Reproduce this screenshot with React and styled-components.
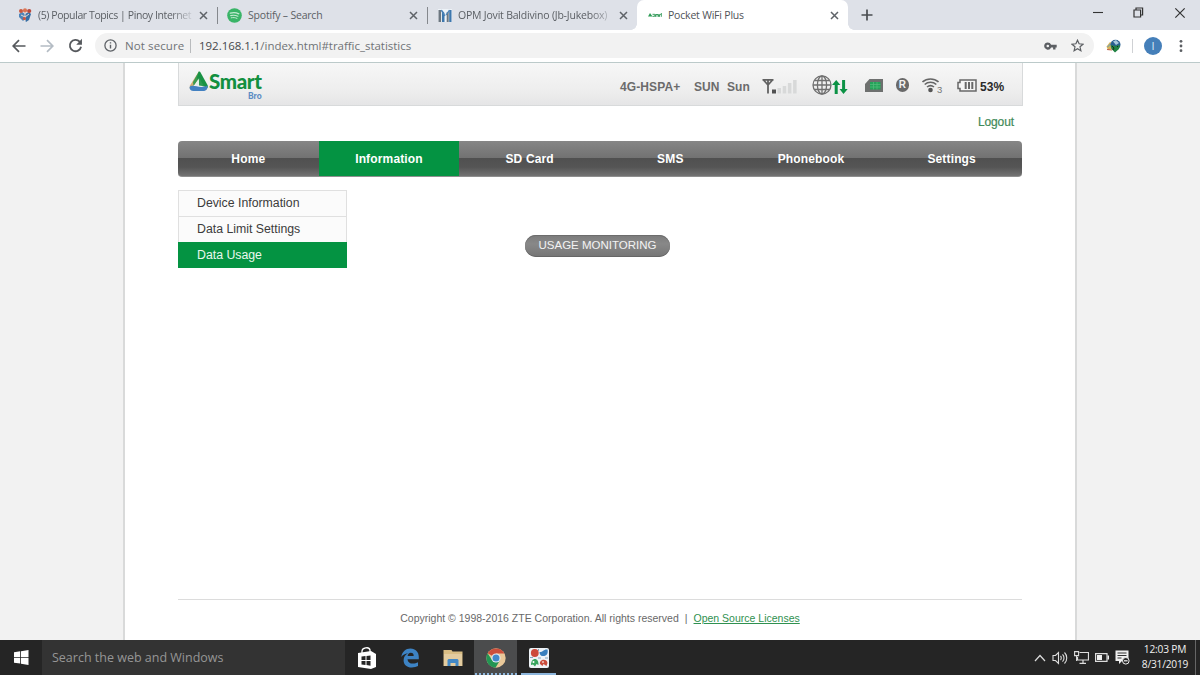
import styled, { createGlobalStyle } from "styled-components";

const GlobalStyle = createGlobalStyle`
  * { box-sizing: border-box; }
  body {
    margin: 0;
    overflow: hidden;
    background: #f1f1f1;
    font-family: "Liberation Sans", Arial, sans-serif;
  }
  svg { display: block; flex: none; }
`;

const Screen = styled.div`
  width: 1200px;
  height: 675px;
  display: flex;
  flex-direction: column;
`;

/* ---------- browser ---------- */

const TabStrip = styled.div`
  height: 30px;
  flex: none;
  display: flex;
  background: #dee1e8;
  font-family: "Open Sans", "Noto Sans", sans-serif;
`;

const Tab = styled.div`
  position: relative;
  width: ${(p) => p.$width}px;
  height: 30px;
  display: flex;
  align-items: center;
  padding: 0 9px 0 ${(p) => p.$left}px;
  background: ${(p) => (p.$active ? "#fff" : "transparent")};
  border-radius: ${(p) => (p.$active ? "7px 7px 0 0" : "0")};

  /* flared feet of the selected tab */
  &::before,
  &::after {
    content: "";
    display: ${(p) => (p.$active ? "block" : "none")};
    position: absolute;
    bottom: 0;
    width: 6px;
    height: 6px;
  }
  &::before {
    left: -6px;
    background: radial-gradient(circle at 0 0, transparent 5.5px, #fff 6px);
  }
  &::after {
    right: -6px;
    background: radial-gradient(circle at 100% 0, transparent 5.5px, #fff 6px);
  }
`;

const TabTitle = styled.span`
  flex: 1;
  margin: 0 ${(p) => (p.$fade ? 7 : 0)}px 0 6px;
  font-size: 10.5px;
  letter-spacing: ${(p) => p.$spacing ?? -0.2}px;
  color: ${(p) => (p.$active ? "#505357" : "#5b5f64")};
  white-space: nowrap;
  mask-image: ${(p) => (p.$fade ? "linear-gradient(90deg, #000 86%, rgba(0,0,0,.15))" : "none")};
`;

const TabDivider = styled.div`
  width: 1px;
  height: 17px;
  align-self: center;
  background: #85888d;
`;

const NewTab = styled.div`
  display: flex;
  align-items: center;
  padding-left: 13px;
`;

const WindowButtons = styled.div`
  display: flex;
  align-items: flex-start;
  gap: 30px;
  margin-left: auto;
  padding: 7px 14px 0 0;
`;

const Toolbar = styled.div`
  height: 33px;
  flex: none;
  display: flex;
  align-items: flex-start;
  background: #fff;
  border-bottom: 1px solid #bccaca;
  font-family: "Open Sans", "Noto Sans", sans-serif;
`;

const NavIcons = styled.div`
  width: 95px;
  height: 31px;
  display: flex;
  align-items: center;
  gap: 14px;
  padding-left: 12px;
`;

const Omnibox = styled.div`
  width: 999px;
  height: 25px;
  margin-top: 3px;
  display: flex;
  align-items: center;
  padding: 0 10px 0 9px;
  border-radius: 13px;
  background: #f2f2f2;
  color: #707376;
  font-size: 11.5px;
`;

const Security = styled.span`
  width: 66px;
  margin-left: 8px;
  border-right: 1px solid #b9bbbd;
  line-height: 14px;
  white-space: nowrap;
  letter-spacing: 0.1px;
`;

const Address = styled.span`
  margin-left: 8px;
  letter-spacing: -0.03px;
  b {
    font-weight: 400;
    color: #45484b;
  }
`;

const OmniboxActions = styled.div`
  display: flex;
  align-items: center;
  gap: 14px;
  margin-left: auto;
`;

const ToolbarActions = styled.div`
  height: 31px;
  display: flex;
  align-items: center;
  padding-left: 12px;
`;

const ToolbarDivider = styled.div`
  width: 1px;
  height: 14px;
  margin: 0 11px;
  background: #cfd1d4;
`;

const Avatar = styled.div`
  width: 18px;
  height: 18px;
  margin-right: 17px;
  border-radius: 50%;
  background: #457fb9;
  color: #dce9f5;
  font-size: 11px;
  line-height: 18px;
  text-align: center;
`;

/* ---------- router page ---------- */

const Viewport = styled.div`
  height: 577px;
  flex: none;
  display: flex;
  justify-content: center;
  background: #f2f2f2;
`;

const Page = styled.div`
  width: 954px;
  height: 577px;
  display: flex;
  flex-direction: column;
  padding: 0 52px 0 53px;
  background: #fff;
  border: solid #d9dada;
  border-width: 0 2px;
`;

const StatusBar = styled.header`
  width: 845px;
  height: 43px;
  flex: none;
  display: flex;
  padding-left: 10px;
  border: 1px solid #d8dadb;
  border-top: 0;
  background: linear-gradient(#f7f7f7, #ededed 70%, #e5e5e6);
`;

const Logo = styled.div`
  width: 431px;
  display: flex;
  align-items: flex-start;
  padding-top: 8px;
`;

const LogoText = styled.div`
  display: flex;
  flex-direction: column;
  align-items: flex-end;
  margin-left: 1px;
  color: #12903f;
  font: 900 20.5px/21px Lato, sans-serif;
  letter-spacing: -0.35px;
`;

const LogoSub = styled.span`
  color: #5b8cc4;
  font: 900 8.5px/8px Lato, sans-serif;
  letter-spacing: 0;
`;

const StatusItem = styled.div`
  width: ${(p) => p.$width}px;
  height: ${(p) => (p.$icon ? 44 : 47)}px;
  display: flex;
  align-items: center;
  white-space: nowrap;
  font-size: 12px;
  font-weight: 700;
  letter-spacing: 0.1px;
  color: ${(p) => (p.$dark ? "#2a2a2a" : "#6b6b6b")};
`;

const LogoutRow = styled.div`
  height: 35px;
  flex: none;
  padding: 8px 9px 0 0;
  text-align: right;
  font-size: 12px;
  line-height: 16px;
  letter-spacing: -0.1px;
  color: #3f8a58;
  -webkit-text-stroke: 0.2px #3f8a58;
`;

const MainNav = styled.nav`
  width: 844px;
  height: 36px;
  flex: none;
  display: grid;
  grid-template-columns: repeat(6, 1fr);
  overflow: hidden;
  border-radius: 4px;
  border-bottom: 1px solid #8f8f8f;
  background: linear-gradient(#868686, #727272 48%, #505050 50%, #555 75%, #737373);
`;

const NavItem = styled.a`
  display: flex;
  align-items: center;
  justify-content: center;
  padding-top: 1px;
  color: #fff;
  font-size: 12px;
  font-weight: 700;
  letter-spacing: 0.15px;
  background: ${(p) => (p.$active ? "#049342" : "transparent")};
`;

const Body = styled.div`
  flex: 1;
  display: flex;
  padding-top: 13px;
`;

const SideMenu = styled.ul`
  width: 169px;
  margin: 0;
  padding: 0;
  list-style: none;
`;

const SideItem = styled.li`
  height: 26px;
  padding-left: 18px;
  font-size: 12.3px;
  line-height: 25px;
  color: ${(p) => (p.$active ? "#e9f7ee" : "#3c3c3c")};
  background: ${(p) => (p.$active ? "#049342" : "#fbfbfb")};
  border: solid ${(p) => (p.$active ? "#049342" : "#e0e0e0")};
  border-width: ${(p) => (p.$active ? "1px" : "1px 1px 0")};
`;

const Content = styled.main`
  padding: 45px 0 0 178px;
`;

const PillButton = styled.button`
  width: 145px;
  height: 22px;
  padding: 0 0 2px;
  border: 0;
  border-radius: 11px;
  background: linear-gradient(#7b7b7b, #888 40%, #757575);
  box-shadow: 0 1px 0 #6c6c6c inset, 0 -1px 0 #666 inset;
  color: #f3f3f3;
  font: 11.5px/20px "Liberation Sans", Arial, sans-serif;
  white-space: nowrap;
`;

const Footer = styled.footer`
  width: 844px;
  height: 41px;
  flex: none;
  padding-top: 11px;
  border-top: 1px solid #dcdcdc;
  text-align: center;
  color: #686868;
  font-size: 10.5px;
  line-height: 15px;
`;

const FooterPipe = styled.span`
  margin: 0 6px;
`;

const FooterLink = styled.a`
  color: #2f9150;
  text-decoration: underline;
`;

/* ---------- taskbar ---------- */

const Taskbar = styled.div`
  height: 35px;
  flex: none;
  display: flex;
  background: #252525;
  color: #f0f0f0;
  font-family: "Open Sans", "Noto Sans", sans-serif;
`;

const Start = styled.div`
  width: 42px;
  padding: 10px 0 0 14px;
`;

const Search = styled.div`
  width: 303px;
  padding-left: 10px;
  background: #333;
  color: #969696;
  font-size: 12.5px;
  line-height: 36px;
`;

const TaskButton = styled.div`
  width: 43px;
  height: 35px;
  display: flex;
  flex-direction: column;
  align-items: center;
  justify-content: space-between;
  background: ${(p) => (p.$focused ? "#4b4c4d" : "transparent")};
`;

const TaskIcon = styled.div`
  height: 33px;
  display: flex;
  align-items: center;
  padding-top: 2px;
`;

const RunningLine = styled.div`
  width: ${(p) => p.$width}px;
  border-bottom: 2px ${(p) => p.$line} #8db6dc;
`;

const Tray = styled.div`
  display: flex;
  align-items: center;
  gap: 6px;
  margin-left: auto;
`;

const Clock = styled.div`
  width: 56px;
  margin-left: 1px;
  padding-bottom: 2px;
  font-size: 10.2px;
  line-height: 14.5px;
  letter-spacing: -0.2px;
  text-align: center;
  white-space: nowrap;
`;

const ShowDesktop = styled.div`
  width: 5px;
  height: 35px;
  margin-left: -4px;
  border-left: 1px solid #666;
`;

/* ---------- icons ---------- */

const CloseIcon = ({ size = 9, color = "#5f6368", stroke = 1.5 }) => (
  <svg width={size} height={size} viewBox="0 0 9 9">
    <path d="M1 1l7 7M8 1L1 8" stroke={color} strokeWidth={stroke} />
  </svg>
);

const ForumIcon = () => (
  <svg width="14" height="14" viewBox="0 0 14 14">
    <path d="M1 6l3-2 3 2v5l-2 2-4-4z" fill="#4f84b8" />
    <path d="M7 6l4-2 2 2-2 6-3 2-1-2z" fill="#386fa5" />
    <circle cx="3" cy="3" r="2" fill="#c9583f" />
    <circle cx="7" cy="2.4" r="2.1" fill="#dc7453" />
    <circle cx="11.2" cy="3" r="2.1" fill="#b84a3d" />
    <path d="M3 7l4 2 4-3M7 5v8" stroke="#e9d8cf" fill="none" />
    <circle cx="6.4" cy="10.5" r="1.6" fill="#cd543d" />
  </svg>
);

const SpotifyIcon = () => (
  <svg width="15" height="15" viewBox="0 0 15 15">
    <circle cx="7.5" cy="7.5" r="7.3" fill="#39b467" />
    <g fill="none" stroke="#c5ead2" strokeLinecap="round">
      <path d="M3.3 5.2c3-.9 6-.6 8.5.6" strokeWidth="1.3" />
      <path d="M3.7 7.6c2.6-.7 5-.4 7.2.7" strokeWidth="1.1" />
      <path d="M4.2 9.8c2-.5 4-.3 5.8.6" strokeWidth="1" />
    </g>
  </svg>
);

const ForumLetterIcon = () => (
  <svg width="14" height="13" viewBox="0 0 14 13">
    <path d="M0 0h14v13H0z" fill="#eef3f8" />
    <path d="M.5 1h2.6v12H.5zM8.7 3h2v10h-2z" fill="#6d7780" />
    <path d="M4 1l2.5 3v9H4zM11.2 1h2.3v12h-2.3z" fill="#3d77ad" />
    <path d="M3 1l4 6M11.5 1L8 6" stroke="#4c83b8" strokeWidth="1.3" />
  </svg>
);

const SmartFavicon = () => (
  <svg width="14" height="6" viewBox="0 0 14 6">
    <path d="M0 4.5l2-3.500 2.500 3.500z" fill="#2b9b53" />
    <path d="M4.500 2.300h2.300v2H4.500M7.500 4.800V2.500h3v2.300M9 2.500v2.300M11.500 4.800V2.500h1.300M13.300 1v3.800" stroke="#3b9e60" strokeWidth="1" fill="none" />
  </svg>
);

const PlusIcon = () => (
  <svg width="12" height="12" viewBox="0 0 12 12">
    <path d="M6 .5v11M.5 6h11" stroke="#4a4d50" strokeWidth="1.7" />
  </svg>
);

const MinimizeIcon = () => (
  <svg width="10" height="12" viewBox="0 0 10 12">
    <path d="M0 5.5h10" stroke="#333" strokeWidth="1.1" />
  </svg>
);

const RestoreIcon = () => (
  <svg width="11" height="11" viewBox="0 0 11 11">
    <path d="M1 3h6.6v7H1zM3 3V1h6.6v7H7.6" fill="none" stroke="#333" strokeWidth="1.2" />
  </svg>
);

const ArrowIcon = ({ color, flip }) => (
  <svg width="14" height="14" viewBox="0 0 14 14">
    <path
      d={flip ? "M.5 7h12M7 1.200L12.800 7 7 12.800" : "M13.500 7h-12M7 1.200L1.200 7 7 12.800"}
      fill="none"
      stroke={color}
      strokeWidth="1.7"
    />
  </svg>
);

const ReloadIcon = () => (
  <svg width="15" height="15" viewBox="0 0 14 14">
    <path d="M12.2 8.2A5.3 5.3 0 1 1 10.9 3.4L12 4.6" fill="none" stroke="#56595d" strokeWidth="1.7" />
    <path d="M13 .8v5.4H7.7z" fill="#56595d" />
  </svg>
);

const InfoIcon = () => (
  <svg width="13" height="13" viewBox="0 0 13 13">
    <circle cx="6.5" cy="6.5" r="5.6" fill="none" stroke="#5f6368" strokeWidth="1.3" />
    <path d="M6.5 5.8v3.8M6.5 3.2v1.4" stroke="#5f6368" strokeWidth="1.4" />
  </svg>
);

const KeyIcon = () => (
  <svg width="13" height="8" viewBox="0 0 13 8">
    <path
      d="M3.8.4a3.6 3.6 0 1 0 3.3 5h2v2h2.4v-2h1.2V2.7H7.1A3.6 3.6 0 0 0 3.8.4zm0 2.3a1.3 1.3 0 1 1 0 2.6 1.3 1.3 0 0 1 0-2.6z"
      fill="#5c5f63"
      fillRule="evenodd"
    />
  </svg>
);

const StarIcon = () => (
  <svg width="13" height="13" viewBox="0 0 13 13">
    <path
      d="M6.5 1.2l1.6 3.6 3.9.4-3 2.6.9 3.9-3.4-2-3.4 2 .9-3.9-3-2.6 3.9-.4z"
      fill="none"
      stroke="#5c5f63"
      strokeWidth="1.2"
    />
  </svg>
);

const DownloaderIcon = () => (
  <svg width="15" height="14" viewBox="0 0 15 14">
    <path d="M.5 7.5L4 3l4 2-2 5-4 1z" fill="#d5b35b" />
    <path d="M1.5 8l3.5-3.5 2 1" stroke="#4f9bd0" fill="none" />
    <circle cx="9.5" cy="5.8" r="5" fill="#285f91" />
    <path d="M7 2.5l3-1.5 3 3-3 2z" fill="#a9c8de" />
    <path d="M5 6l4 1 5-1-1 4-4 3.5L5.5 10z" fill="#218243" />
    <path d="M6 7l2 2-1 2M11 7l1 1" stroke="#142c20" fill="none" />
    <path d="M1 10.5l5 .5" stroke="#c25f48" strokeWidth="1.2" />
  </svg>
);

const MenuDotsIcon = () => (
  <svg width="4" height="14" viewBox="0 0 4 14">
    <circle cx="2" cy="2.3" r="1.4" fill="#5c5f63" />
    <circle cx="2" cy="7" r="1.4" fill="#5c5f63" />
    <circle cx="2" cy="11.7" r="1.4" fill="#5c5f63" />
  </svg>
);

const SmartIcon = () => (
  <svg width="19" height="21" viewBox="0 0 19 21">
    <path d="M9.8 .5L1 14.5l-.5 3L5 14l5-7z" fill="#d1ac72" />
    <path d="M9.8 .5L4 11l.5 4L10.500 6.500z" fill="#3a9b50" />
    <path d="M9.8 .5c1 0 1.500.5 2 1.400L18.500 14c.5 1 .3 2 0 3L13 14.500 8 7z" fill="#199245" />
    <path d="M9.800 7.500L7 14l6 .5z" fill="#e6f2e8" />
    <path d="M10 6.500v8l5 .8z" fill="#2c9a52" />
    <path d="M.6 16c3.400-3.500 10 2.500 17.900-1.500.5 4-1.500 5.500-4.500 5.500H4.500C2 20 .4 18.500.6 16z" fill="#4381c1" />
  </svg>
);

const SignalIcon = () => (
  <svg width="36" height="17" viewBox="0 0 36 17">
    <path d="M.5 1.8h11M1.500 2l4.500 5 4.500-5M6 1.500V15.500" fill="none" stroke="#626262" strokeWidth="1.8" />
    <path d="M10 11.500h4v4h-4z" fill="#515151" />
    <path d="M15.500 10H19v5.500h-3.500zM20.700 8h3.500v7.500h-3.500zM25.900 5h3.500v10.500h-3.500zM31.100 2h3.500v13.500h-3.500z" fill="#d8d9d9" />
  </svg>
);

const GlobeIcon = () => (
  <svg width="20" height="20" viewBox="0 0 20 20">
    <g fill="none" stroke="#707070" strokeWidth="1.3">
      <circle cx="10" cy="10" r="9" />
      <ellipse cx="10" cy="10" rx="4.6" ry="9" />
      <path d="M10 1v18M1 10h18M2.500 5.500h15M2.500 14.500h15" />
    </g>
  </svg>
);

const TransferIcon = styled(({ className }) => (
  <svg className={className} width="16" height="16" viewBox="0 0 16 16">
    <path d="M4.200 1L0 6h2.700v9h3V6h2.700zM11.500 15L7.500 10h2.600V1h3v9h2.600z" fill="#0c9245" />
  </svg>
))`
  margin-top: 4px;
`;

const SimIcon = () => (
  <svg width="18" height="13" viewBox="0 0 18 13">
    <path d="M4.500 0H18v13H0V5z" fill="#6e706f" />
    <path d="M5 3h10.500v7.500H5z" fill="#25a35a" />
    <path d="M5 5.500h10.500M5 8h10.500M8.500 3v7.500M12 3v7.500" stroke="#55bd7c" strokeWidth=".7" />
  </svg>
);

const RoamingBadge = styled.div`
  width: 13px;
  height: 14px;
  border-radius: 7px;
  background: #696969;
  color: #f3f3f3;
  font-size: 10px;
  line-height: 14px;
  text-align: center;
`;

const WifiIcon = () => (
  <svg width="17" height="16" viewBox="0 0 17 16">
    <g fill="none" stroke="#666" strokeWidth="1.6">
      <path d="M.5 5a12 12 0 0 1 16 0" />
      <path d="M2.700 7.500a8.700 8.700 0 0 1 11.600 0" />
      <path d="M5 10a5.500 5.500 0 0 1 7 0" />
    </g>
    <circle cx="8.500" cy="13" r="2.300" fill="#555" />
  </svg>
);

const WifiCount = styled.span`
  margin: 9px 0 0 -2px;
  font-size: 9.5px;
  font-weight: 400;
  color: #777;
`;

const BatteryIcon = () => (
  <svg width="20" height="13" viewBox="0 0 20 13">
    <path d="M3 1h16v11H3V9.500H1v-6h2z" fill="#f4f4f4" stroke="#686868" strokeWidth="1.5" />
    <path d="M8.700 3v7M12 3v7M15.300 3v7" stroke="#686868" strokeWidth="2" />
  </svg>
);

const WindowsIcon = () => (
  <svg width="15" height="15" viewBox="0 0 15 15">
    <path d="M0 2.200L6.200 1.300V7H0zM7 1.200L14.500 0v7H7zM0 7.800h6.200v5.800L0 12.700zM7 7.800h7.500V15L7 13.800z" fill="#fff" />
  </svg>
);

const StoreIcon = () => (
  <svg width="20" height="22" viewBox="0 0 20 22">
    <path d="M5 7V4c0-3 7-5 8-1v3" fill="none" stroke="#fff" strokeWidth="1.3" />
    <path d="M1 6l13-2 5 3v13l-5 2-13-2z" fill="#fff" />
    <path d="M4.500 9.500l4-.5v4h-4zM9.500 9l4-.5V13h-4zM4.500 14h4v4l-4-.5zM9.500 14h4v4.700l-4-.6z" fill="#252525" />
  </svg>
);

const EdgeIcon = () => (
  <svg width="18" height="20" viewBox="0 0 18 20">
    <path
      d="M.3 9C1.200 3.500 4.700.500 9.400.500c5.300 0 8.400 3.700 8.400 8.400v2.300H6.500c.2 3 2.500 4.400 5.300 4.400 2 0 3.700-.5 5.200-1.400v3.900c-1.600.9-3.800 1.400-6.200 1.400-5.200 0-8.200-3-8.200-7.300 0-3.200 1.700-5.800 4.500-7C4 5.500 1.700 6.700.3 9zm6.300-1.100h6.100c0-2-1-3.200-2.900-3.200-1.800 0-3 1.300-3.200 3.200z"
      fill="#3d83c4"
      fillRule="evenodd"
    />
  </svg>
);

const FolderIcon = () => (
  <svg width="20" height="18" viewBox="0 0 20 18">
    <path d="M.5 1h8l1 1.500h10V17H.5z" fill="#d9bd84" />
    <path d="M1 5h18v12H1z" fill="#e3cca0" />
    <path d="M4.500 17v-6l1-1h9l1 1v6h-3v-3h-5v3z" fill="#4389c7" />
  </svg>
);

const ChromeIcon = () => (
  <svg width="20" height="20" viewBox="0 0 20 20">
    <circle cx="10" cy="10" r="9.7" fill="#e9c899" />
    <path d="M10 10L1.600 5.200A9.700 9.700 0 0 1 18.500 5.500H10z" fill="#cc4f3c" />
    <path d="M1.600 5.200A9.700 9.700 0 0 0 9.500 19.700L14 12.200 10 10 6 12z" fill="#239553" />
    <circle cx="10" cy="10" r="4.6" fill="#e7edf3" />
    <circle cx="10" cy="10" r="3.5" fill="#4289cb" />
  </svg>
);

const GameIcon = () => (
  <svg width="20" height="20" viewBox="0 0 20 20">
    <rect width="20" height="20" rx="2" fill="#eef3f7" />
    <circle cx="5.8" cy="5" r="3.9" fill="#cd4a3b" />
    <path d="M10.500 4c4 0 4-3 8-2.500 1 4-1 7-5 6.500-2 0-3-2-3-4z" fill="#397fbd" />
    <path d="M2 17c0-8 8-8 7.500 0l-2-1-1.500 2.500-2-2z" fill="#38a55f" />
    <path d="M11 16c-1-5 7-6 7.500-1l-1 3-3-2-1 2z" fill="#c94c3c" />
    <circle cx="4.5" cy="14" r="1" fill="#fff" />
    <circle cx="14" cy="14" r="1" fill="#f0c9c2" />
    <path d="M1 9.500h3M9 10h3M16 10h3M9.500 1v2" stroke="#86a7bf" />
  </svg>
);

const ChevronUpIcon = () => (
  <svg width="12" height="8" viewBox="0 0 12 8">
    <path d="M1 7l5-5.500L11 7" fill="none" stroke="#ddd" strokeWidth="1.2" />
  </svg>
);

const SpeakerIcon = () => (
  <svg width="16" height="14" viewBox="0 0 16 14">
    <path
      d="M1 4.500h2.500l3-3v11l-3-3H1zM8.500 5c1 1 1 3 0 4M10.500 3.300c2 2 2 5.400 0 7.400M12.500 1.500c3 3 3 8 0 11"
      fill="none"
      stroke="#ddd"
      strokeWidth="1.1"
    />
  </svg>
);

const NetworkIcon = () => (
  <svg width="15" height="13" viewBox="0 0 15 13">
    <path d="M5.500 1.500h9V9h-11V6M9 9v3M5.500 12.400H12" fill="none" stroke="#ddd" strokeWidth="1.2" />
    <path d="M.6 .6h4v4h-4zM2.600 5v5" fill="none" stroke="#ddd" strokeWidth="1.1" />
  </svg>
);

const TrayBatteryIcon = () => (
  <svg width="14" height="9" viewBox="0 0 14 9">
    <path d="M.6 .6H12v7.800H.6z" fill="none" stroke="#ddd" strokeWidth="1.2" />
    <path d="M2 2h5v5H2zM12.600 2.500H14v4h-1.400z" fill="#eee" />
  </svg>
);

const NoticeIcon = () => (
  <svg width="15" height="15" viewBox="0 0 15 15">
    <path d="M.5 .5h13V11H7l-3 3v-3H.5z" fill="#f1f1f1" />
    <path d="M2.500 3h9M2.500 5.500h9M2.500 8h4" stroke="#333" />
    <circle cx="10.800" cy="10.800" r="3.300" fill="#252525" stroke="#f1f1f1" />
    <path d="M9 10.800h3.600" stroke="#f1f1f1" strokeWidth="1.2" />
  </svg>
);

const navItems = ["Home", "Information", "SD Card", "SMS", "Phonebook", "Settings"];
const sideItems = ["Device Information", "Data Limit Settings", "Data Usage"];

const taskItems = [
  { icon: StoreIcon },
  { icon: EdgeIcon },
  { icon: FolderIcon },
  { icon: ChromeIcon, focused: true, line: "dotted", width: 42 },
  { icon: GameIcon, line: "solid", width: 35 },
];

const Browser = () => (
  <>
    <TabStrip>
      <Tab $width={217} $left={18}>
        <ForumIcon />
        <TabTitle $fade $spacing={-0.41}>
          (5) Popular Topics | Pinoy Internet
        </TabTitle>
        <CloseIcon />
      </Tab>
      <TabDivider />
      <Tab $width={209} $left={9}>
        <SpotifyIcon />
        <TabTitle>Spotify – Search</TabTitle>
        <CloseIcon />
      </Tab>
      <TabDivider />
      <Tab $width={209} $left={10}>
        <ForumLetterIcon />
        <TabTitle $fade>OPM Jovit Baldivino (Jb-Jukebox)</TabTitle>
        <CloseIcon />
      </Tab>
      <Tab $width={211} $left={11} $active>
        <SmartFavicon />
        <TabTitle $active>Pocket WiFi Plus</TabTitle>
        <CloseIcon />
      </Tab>
      <NewTab>
        <PlusIcon />
      </NewTab>
      <WindowButtons>
        <MinimizeIcon />
        <RestoreIcon />
        <CloseIcon size={12} color="#333" stroke={0.9} />
      </WindowButtons>
    </TabStrip>
    <Toolbar>
      <NavIcons>
        <ArrowIcon color="#56595d" />
        <ArrowIcon color="#b4bcc4" flip />
        <ReloadIcon />
      </NavIcons>
      <Omnibox>
        <InfoIcon />
        <Security>Not secure</Security>
        <Address>
          <b>192.168.1.1</b>/index.html#traffic_statistics
        </Address>
        <OmniboxActions>
          <KeyIcon />
          <StarIcon />
        </OmniboxActions>
      </Omnibox>
      <ToolbarActions>
        <DownloaderIcon />
        <ToolbarDivider />
        <Avatar>I</Avatar>
        <MenuDotsIcon />
      </ToolbarActions>
    </Toolbar>
  </>
);

const RouterPage = () => (
  <Viewport>
    <Page>
      <StatusBar>
        <Logo>
          <SmartIcon />
          <LogoText>
            Smart
            <LogoSub>Bro</LogoSub>
          </LogoText>
        </Logo>
        <StatusItem $width={74}>4G-HSPA+</StatusItem>
        <StatusItem $width={33}>SUN</StatusItem>
        <StatusItem $width={35}>Sun</StatusItem>
        <StatusItem $width={50}>
          <SignalIcon />
        </StatusItem>
        <StatusItem $width={53} $icon>
          <GlobeIcon />
          <TransferIcon />
        </StatusItem>
        <StatusItem $width={31} $icon>
          <SimIcon />
        </StatusItem>
        <StatusItem $width={26} $icon>
          <RoamingBadge>R</RoamingBadge>
        </StatusItem>
        <StatusItem $width={35} $icon>
          <WifiIcon />
          <WifiCount>3</WifiCount>
        </StatusItem>
        <StatusItem $width={23} $icon>
          <BatteryIcon />
        </StatusItem>
        <StatusItem $width={30} $dark>
          53%
        </StatusItem>
      </StatusBar>
      <LogoutRow>Logout</LogoutRow>
      <MainNav>
        {navItems.map((item) => (
          <NavItem key={item} $active={item === "Information"}>
            {item}
          </NavItem>
        ))}
      </MainNav>
      <Body>
        <SideMenu>
          {sideItems.map((item) => (
            <SideItem key={item} $active={item === "Data Usage"}>
              {item}
            </SideItem>
          ))}
        </SideMenu>
        <Content>
          <PillButton>USAGE MONITORING</PillButton>
        </Content>
      </Body>
      <Footer>
        Copyright © 1998-2016 ZTE Corporation. All rights reserved
        <FooterPipe>|</FooterPipe>
        <FooterLink>Open Source Licenses</FooterLink>
      </Footer>
    </Page>
  </Viewport>
);

const App = () => (
  <Screen>
    <GlobalStyle />
    <Browser />
    <RouterPage />
    <Taskbar>
      <Start>
        <WindowsIcon />
      </Start>
      <Search>Search the web and Windows</Search>
      {taskItems.map(({ icon: Icon, focused, line, width }, i) => (
        <TaskButton key={i} $focused={focused}>
          <TaskIcon>
            <Icon />
          </TaskIcon>
          {line && <RunningLine $line={line} $width={width} />}
        </TaskButton>
      ))}
      <Tray>
        <ChevronUpIcon />
        <SpeakerIcon />
        <NetworkIcon />
        <TrayBatteryIcon />
        <NoticeIcon />
        <Clock>
          12:03 PM
          <br />
          8/31/2019
        </Clock>
        <ShowDesktop />
      </Tray>
    </Taskbar>
  </Screen>
);

export default App;
